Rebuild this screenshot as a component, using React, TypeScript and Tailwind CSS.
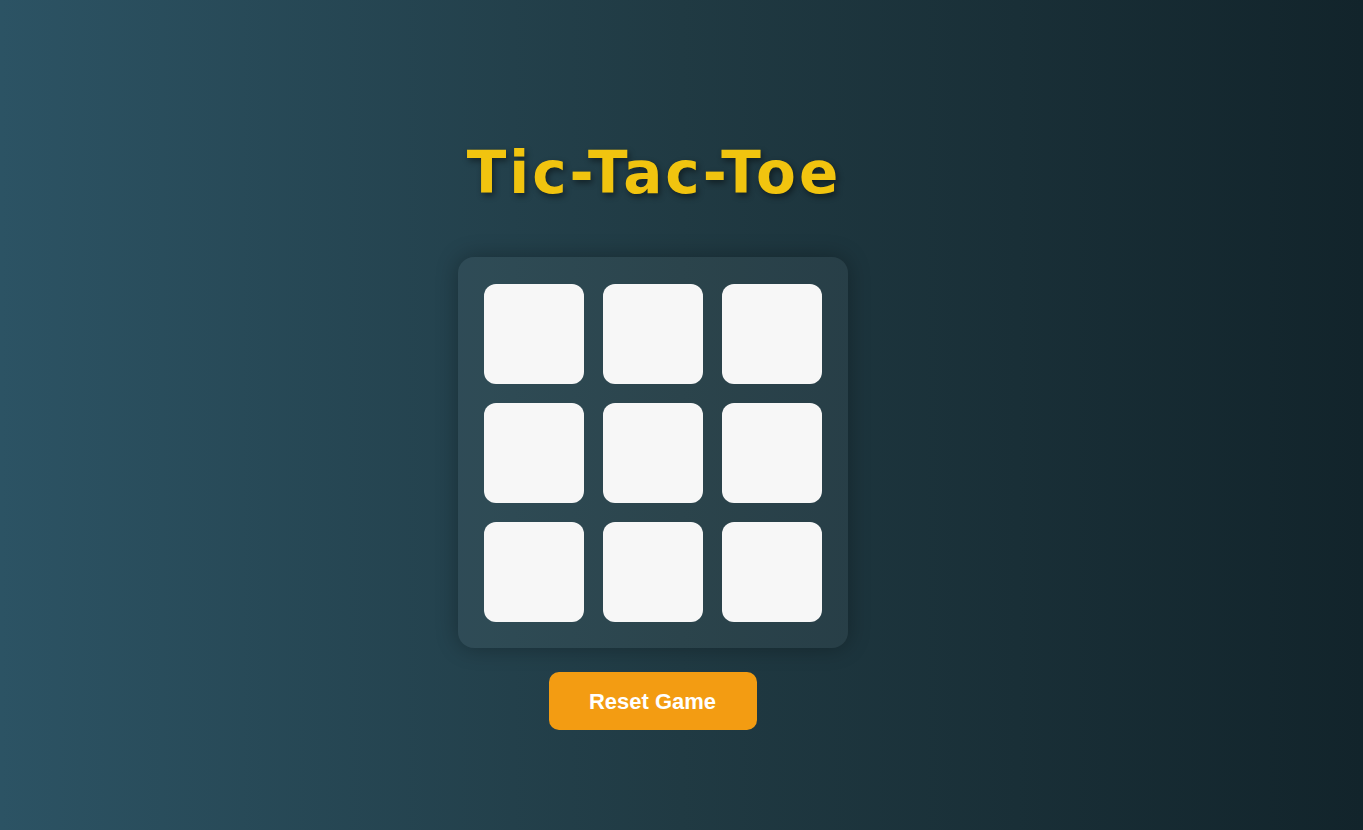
export default function App() {
  const cells = Array.from({ length: 9 });

  return (
    <div className="min-h-screen w-full bg-gradient-to-r from-[#2c5364] via-[#203a43] to-[#12242b] flex flex-col items-center pt-[141px] pr-[58px]">
      <h1 className="text-[58px] leading-[64px] font-bold text-[#f1c40f] tracking-[3px] pl-[3px] [font-family:'DejaVu_Sans',sans-serif] [text-shadow:2px_3px_6px_rgba(0,0,0,0.45)]">
        Tic-Tac-Toe
      </h1>

      <div className="mt-[52px] p-[26px] pt-[27px] rounded-2xl bg-white/5 shadow-[0_0_22px_rgba(0,0,0,0.3)]">
        <div className="grid grid-cols-3 gap-[19px]">
          {cells.map((_, i) => (
            <button
              key={i}
              className="w-[100px] h-[100px] rounded-xl bg-[#f7f7f7]"
            />
          ))}
        </div>
      </div>

      <button className="mt-[24px] w-[208px] h-[58px] rounded-[10px] bg-[#f39c12] text-white text-[22px] font-bold [font-family:'Liberation_Sans',Arial,sans-serif]">
        Reset Game
      </button>
    </div>
  );
}
